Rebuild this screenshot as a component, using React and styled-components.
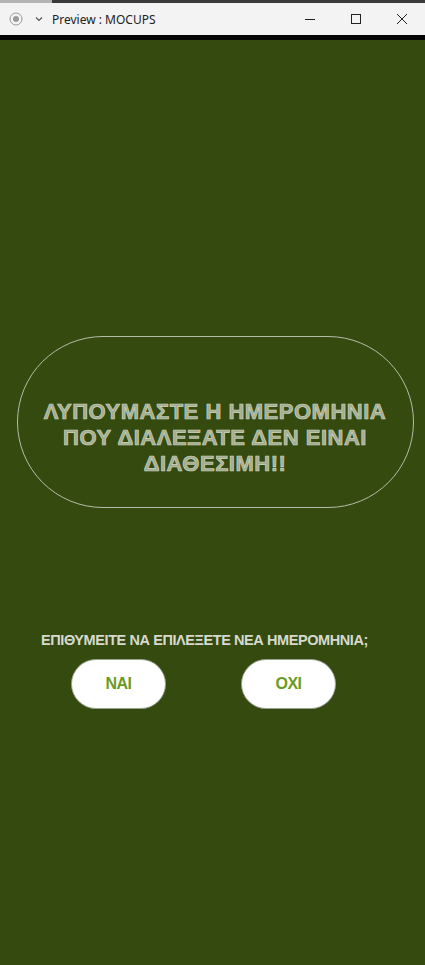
import React from "react";
import styled, { createGlobalStyle } from "styled-components";

const Global = createGlobalStyle`
  html, body { margin: 0; padding: 0; }
  body { background: #344a0f; font-family: "Liberation Sans", Arial, sans-serif; }
  #root { min-height: 965px; display: flex; flex-direction: column; }
`;

const Window = styled.div`
  display: flex;
  flex-direction: column;
  height: 965px;
  width: 425px;
  overflow: hidden;
`;

const TopStrip = styled.div`
  height: 3px;
  background: #3a3a3a;
  display: flex;
`;

const StripHighlight = styled.div`
  width: 52px;
  background: #b4b4b4;
`;

const TitleBar = styled.div`
  height: 32px;
  background: #f3f3f3;
  display: flex;
  align-items: center;
  padding-left: 9px;
`;

const TitleText = styled.span`
  font-family: "Noto Sans", "Open Sans", sans-serif;
  font-size: 12px;
  color: #222;
  margin-left: 6px;
  flex: 1;
`;

const WinButtons = styled.div`
  display: flex;
  align-items: center;
`;

const WinBtn = styled.div`
  width: 46px;
  height: 32px;
  display: flex;
  align-items: center;
  justify-content: center;
`;

const BlackBand = styled.div`
  height: 5px;
  background: #050505;
`;

const Screen = styled.div`
  flex: 1;
  background: #344a0f;
  display: flex;
  flex-direction: column;
  align-items: center;
  padding-top: 296px;
`;

const Pill = styled.div`
  box-sizing: border-box;
  width: 397px;
  height: 172px;
  margin-left: 5px;
  border: 1px solid #b6bcab;
  border-radius: 86px;
  display: flex;
  align-items: center;
  justify-content: center;
  padding-top: 32px;
`;

const Message = styled.h1`
  margin: 0;
  text-align: center;
  font-family: "Liberation Sans", Arial, sans-serif;
  font-weight: 700;
  font-size: 22px;
  line-height: 26px;
  letter-spacing: 0.5px;
  color: #a3ad8e;
  -webkit-text-stroke: 0.7px #cfd5c3;
`;

const Question = styled.p`
  margin: 124px 0 0 0;
  align-self: flex-start;
  padding-left: 41px;
  font-family: "Liberation Sans", Arial, sans-serif;
  font-weight: 700;
  font-size: 14.5px;
  letter-spacing: -0.42px;
  color: #d6dacd;
`;

const ButtonRow = styled.div`
  align-self: flex-start;
  display: flex;
  gap: 75px;
  padding-left: 71px;
  margin-top: 11px;
`;

const Choice = styled.button`
  width: 95px;
  height: 50px;
  border-radius: 25px;
  border: 1px solid #9aa08f;
  background: #ffffff;
  color: #6c9a22;
  font-family: "Liberation Sans", Arial, sans-serif;
  font-weight: 700;
  font-size: 16px;
  letter-spacing: -0.6px;
  cursor: pointer;
`;

export default function App() {
  return (
    <Window>
      <Global />
      <TopStrip>
        <StripHighlight />
      </TopStrip>
      <TitleBar>
        <svg width="14" height="14" viewBox="0 0 14 14">
          <circle cx="7" cy="7" r="6" fill="none" stroke="#9a9a9a" strokeWidth="1" />
          <circle cx="7" cy="7" r="3" fill="#9a9a9a" />
        </svg>
        <svg width="14" height="14" viewBox="0 0 14 14" style={{ marginLeft: 9 }}>
          <path d="M4 5.5 L7 8.5 L10 5.5" fill="none" stroke="#555" strokeWidth="1.2" />
        </svg>
        <TitleText>Preview : MOCUPS</TitleText>
        <WinButtons>
          <WinBtn>
            <svg width="12" height="12" viewBox="0 0 12 12">
              <path d="M1 6.5 H11" stroke="#222" strokeWidth="1" />
            </svg>
          </WinBtn>
          <WinBtn>
            <svg width="12" height="12" viewBox="0 0 12 12">
              <rect x="1.5" y="1.5" width="9" height="9" fill="none" stroke="#222" strokeWidth="1" />
            </svg>
          </WinBtn>
          <WinBtn>
            <svg width="12" height="12" viewBox="0 0 12 12">
              <path d="M1 1 L11 11 M11 1 L1 11" stroke="#222" strokeWidth="1" />
            </svg>
          </WinBtn>
        </WinButtons>
      </TitleBar>
      <BlackBand />
      <Screen>
        <Pill>
          <Message>
            ΛΥΠΟΥΜΑΣΤΕ Η ΗΜΕΡΟΜΗΝΙΑ
            <br />
            ΠΟΥ ΔΙΑΛΕΞΑΤΕ ΔΕΝ ΕΙΝΑΙ
            <br />
            ΔΙΑΘΕΣΙΜΗ!!
          </Message>
        </Pill>
        <Question>ΕΠΙΘΥΜΕΙΤΕ ΝΑ ΕΠΙΛΕΞΕΤΕ ΝΕΑ ΗΜΕΡΟΜΗΝΙΑ;</Question>
        <ButtonRow>
          <Choice>ΝΑΙ</Choice>
          <Choice>ΟΧΙ</Choice>
        </ButtonRow>
      </Screen>
    </Window>
  );
}
